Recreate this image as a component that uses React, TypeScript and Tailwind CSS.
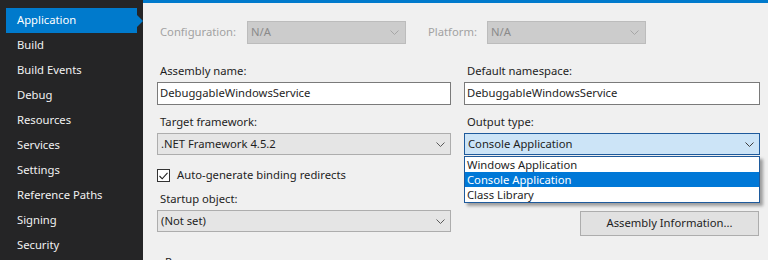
import React from "react";

const navItems = [
  "Application",
  "Build",
  "Build Events",
  "Debug",
  "Resources",
  "Services",
  "Settings",
  "Reference Paths",
  "Signing",
  "Security",
];

function Chevron({ color = "#5a5a5a" }: { color?: string }) {
  return (
    <svg width="9" height="5" viewBox="0 0 9 5" className="shrink-0">
      <path d="M0.5 0.5 L4.5 4.5 L8.5 0.5" fill="none" stroke={color} strokeWidth="1" />
    </svg>
  );
}

function Label({ children }: { children: React.ReactNode }) {
  return <div className="h-4 leading-4 pl-[3px] mb-[3px] text-[#1e1e1e]">{children}</div>;
}

function Combo({ value }: { value: string }) {
  return (
    <div className="h-[22px] flex items-center justify-between pl-[3px] pr-[5px] bg-[#e5e5e5] border border-[#adadad] text-[#1e1e1e]">
      <span>{value}</span>
      <Chevron />
    </div>
  );
}

export default function App() {
  return (
    <div className="w-[768px] h-[260px] flex overflow-hidden text-[11.25px] font-['Segoe_UI','Noto_Sans',sans-serif]">
      {/* Side navigation */}
      <div className="w-[143px] shrink-0 bg-[#252526] pt-2 flex flex-col">
        {navItems.map((item, i) => (
          <div
            key={item}
            className={
              i === 0
                ? "relative ml-[6px] w-[131px] h-[25px] pl-[11px] flex items-center bg-[#007acc] text-white"
                : "ml-[6px] w-[131px] h-[25px] pl-[11px] flex items-center text-[#f1f1f1]"
            }
          >
            {item}
            {i === 0 && (
              <span className="absolute left-full top-1/2 -translate-y-1/2 w-0 h-0 border-l-[6px] border-l-[#007acc] border-y-[6px] border-y-transparent" />
            )}
          </div>
        ))}
      </div>

      {/* Property page */}
      <div className="flex-1 bg-[#f0f0f0] border-t-[3px] border-[#007acc] flex flex-col">
        <div className="flex items-center mt-[18px] ml-[17px]">
          <span className="w-[87px] text-[#a2a2a2]">Configuration:</span>
          <div className="w-[159px] h-[23px] flex items-center justify-between pl-[3px] pr-[6px] bg-[#cccccc] border border-[#bcbcbc] text-[#8a8a8a]">
            <span>N/A</span>
            <Chevron color="#a6a6a6" />
          </div>
          <span className="ml-[22px] w-[59px] text-[#a2a2a2]">Platform:</span>
          <div className="w-[159px] h-[23px] flex items-center justify-between pl-[3px] pr-[6px] bg-[#cccccc] border border-[#bcbcbc] text-[#8a8a8a]">
            <span>N/A</span>
            <Chevron color="#a6a6a6" />
          </div>
        </div>

        <div className="ml-[14px] mt-[14px] h-px bg-[#a0a0a0]" />

        <div className="ml-[14px] mt-[5px] grid grid-cols-[294px_296px] gap-x-[13px]">
          <div>
            <Label>Assembly name:</Label>
            <div className="h-[23px] flex items-center pl-[2px] bg-white border border-[#7a7a7a] text-[#1e1e1e]">
              DebuggableWindowsService
            </div>
          </div>
          <div>
            <Label>Default namespace:</Label>
            <div className="h-[23px] flex items-center pl-[2px] bg-white border border-[#7a7a7a] text-[#1e1e1e]">
              DebuggableWindowsService
            </div>
          </div>

          <div className="mt-[9px]">
            <Label>Target framework:</Label>
            <Combo value=".NET Framework 4.5.2" />
          </div>
          <div className="mt-[9px] relative z-10">
            <Label>Output type:</Label>
            <div className="h-[22px] flex items-center justify-between pl-[3px] pr-[5px] bg-[#cce4f7] border border-[#1e5a9c] text-[#1e1e1e]">
              <span>Console Application</span>
              <Chevron color="#3c3c3c" />
            </div>
            {/* Open dropdown list */}
            <div className="absolute left-0 right-0 top-full mt-px bg-white border border-[#1e5a9c] shadow-[3px_3px_3px_rgba(0,0,0,0.35)] text-[#1e1e1e]">
              <div className="h-[15px] leading-[15px] pl-[2px]">Windows Application</div>
              <div className="h-[15px] leading-[15px] pl-[2px] bg-[#0078d7] text-white">Console Application</div>
              <div className="h-[15px] leading-[15px] pl-[2px]">Class Library</div>
            </div>
          </div>

          <div className="col-span-2 mt-[14px] flex items-center gap-[7px] h-[13px]">
            <span className="w-[13px] h-[13px] bg-white border border-[#333333] flex items-center justify-center">
              <svg width="9" height="8" viewBox="0 0 9 8">
                <path d="M0.5 4 L3.2 6.8 L8.5 0.8" fill="none" stroke="#222222" strokeWidth="1.1" />
              </svg>
            </span>
            <span className="text-[#1e1e1e]">Auto-generate binding redirects</span>
          </div>

          <div className="mt-[9px]">
            <Label>Startup object:</Label>
            <Combo value="(Not set)" />
          </div>
          <div className="mt-[9px] pt-[20px] flex justify-end pr-px">
            <button className="w-[179px] h-[25px] bg-[#e1e1e1] border border-[#adadad] text-[#1e1e1e]">
              Assembly Information...
            </button>
          </div>
        </div>

        <div className="ml-[22px] mt-[18px] h-4 leading-4 text-[#1e1e1e]">Resources</div>
      </div>
    </div>
  );
}
